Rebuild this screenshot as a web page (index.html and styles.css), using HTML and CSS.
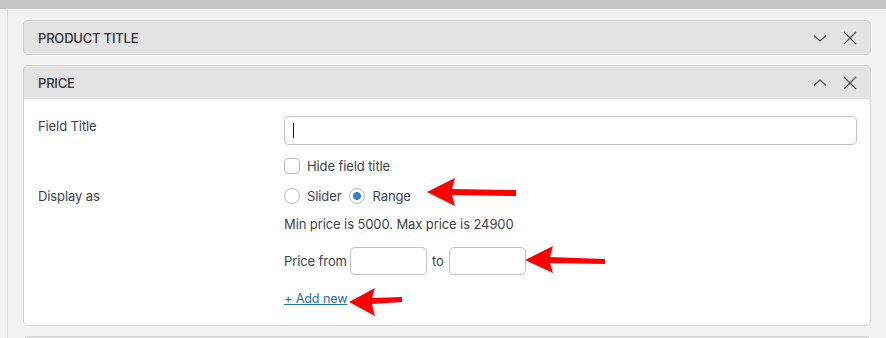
FILE: index.html
```html
<!DOCTYPE html>
<html lang="en">
<head>
    <meta charset="UTF-8">
    <meta name="viewport" content="width=device-width, initial-scale=1.0">
    <title>Filter Fields</title>
    <link rel="stylesheet" href="styles.css">
</head>
<body>
    <div class="topbar"></div>

    <div class="page">
        <div class="panel">
            <div class="panel-head">
                <span class="panel-title">Product title</span>
                <span class="panel-actions">
                    <svg width="14" height="14" viewBox="0 0 14 14"><path d="M1 4.5 L7 10 L13 4.5" /></svg>
                    <svg width="14" height="14" viewBox="0 0 14 14"><path d="M1 1 L13 13 M13 1 L1 13" /></svg>
                </span>
            </div>
        </div>

        <div class="panel">
            <div class="panel-head">
                <span class="panel-title">Price</span>
                <span class="panel-actions">
                    <svg width="14" height="14" viewBox="0 0 14 14"><path d="M1 9.5 L7 4 L13 9.5" /></svg>
                    <svg width="14" height="14" viewBox="0 0 14 14"><path d="M1 1 L13 13 M13 1 L1 13" /></svg>
                </span>
            </div>
            <div class="panel-body">
                <div class="field-row">
                    <label class="field-label" for="fieldTitle">Field Title</label>
                    <div class="field-controls">
                        <input type="text" id="fieldTitle" class="text-input">
                        <label class="option-line">
                            <input type="checkbox" class="check">
                            <span>Hide field title</span>
                        </label>
                    </div>
                </div>

                <div class="field-row">
                    <span class="field-label tall">Display as</span>
                    <div class="field-controls">
                        <div class="option-line">
                            <label class="option"><input type="radio" name="display" class="radio"> <span>Slider</span></label>
                            <label class="option"><input type="radio" name="display" class="radio" checked> <span>Range</span></label>
                        </div>
                        <p class="hint">Min price is 5000. Max price is 24900</p>
                        <div class="price-range">
                            <span>Price from</span>
                            <input type="text" class="small-input">
                            <span>to</span>
                            <input type="text" class="small-input">
                        </div>
                        <a href="#" class="add-new">+ Add new</a>
                    </div>
                </div>
            </div>
        </div>

        <div class="panel">
            <div class="panel-head"></div>
        </div>
    </div>

    <!-- red annotation arrows -->
    <svg class="annotations" width="886" height="338" viewBox="0 0 886 338">
        <polygon points="427,192 455,178 452,189 516,190 516,196 452,195 455,206" />
        <polygon points="525,260 553,246 550,257 605,259 605,264 550,263 553,273" />
        <polygon points="349,302 375,288 372,298 402,297 402,302 372,304 375,316" />
    </svg>
</body>
</html>
```

FILE: styles.css
```css
body {
    margin: 0;
    font-family: Inter, "Noto Sans", sans-serif;
    font-size: 13px;
    letter-spacing: -0.1px;
    color: #3c434a;
    background-color: #f2f2f2;
    overflow: hidden;
}

.topbar {
    height: 9px;
    background-color: #c5c5c5;
}

.page {
    margin-left: 7px;
    border-left: 1px solid #dcdcdc;
    padding: 11px 15px 0 15px;
    min-height: 400px;
}

.panel {
    border: 1px solid #d3d3d3;
    border-radius: 5px;
    background-color: #e3e3e3;
    margin-bottom: 10px;
    overflow: hidden;
}

.panel-head {
    box-sizing: border-box;
    height: 33px;
    display: flex;
    align-items: center;
    justify-content: space-between;
    padding: 1px 13px 0 14px;
}

.panel-title {
    text-transform: uppercase;
    font-weight: 500;
    font-size: 13px;
    color: #333;
    letter-spacing: -0.2px;
}

.panel-actions {
    display: flex;
    gap: 16px;
    align-items: center;
}

.panel-actions svg {
    fill: none;
    stroke: #4a4a4a;
    stroke-width: 1.2;
}

.panel-body {
    background-color: white;
    padding: 17px 13px 17px 14px;
}

.field-row {
    display: flex;
}

.field-row + .field-row {
    margin-top: 10px;
}

.field-label {
    width: 246px;
    flex-shrink: 0;
    line-height: 18px;
    padding-top: 1px;
}

.field-label.tall {
    line-height: 20px;
    padding-top: 0;
}

.field-controls {
    flex: 1;
}

.text-input {
    display: block;
    box-sizing: border-box;
    width: 100%;
    height: 29px;
    margin: 0;
    border: 1px solid #c3c3c3;
    border-radius: 5px;
    background: linear-gradient(#1d1d1d, #1d1d1d) 8px 6px / 1px 15px no-repeat, white;
    outline: none;
}

.option-line {
    display: flex;
    align-items: center;
    gap: 7px;
    height: 20px;
    margin-top: 11px;
}

.field-row + .field-row .option-line {
    margin-top: 0;
    gap: 8px;
}

.option {
    display: flex;
    align-items: center;
    gap: 7px;
}

.check,
.radio {
    appearance: none;
    -webkit-appearance: none;
    width: 16px;
    height: 16px;
    margin: 0;
    border: 1px solid #b9b9b9;
    background-color: white;
    box-sizing: border-box;
}

.check {
    border-radius: 4px;
}

.radio {
    border-radius: 50%;
}

.radio:checked {
    background: radial-gradient(circle, #3582c4 0 3.6px, white 4.2px);
}

.hint {
    margin: 9px 0 0 0;
    line-height: 18px;
}

.price-range {
    display: flex;
    align-items: center;
    gap: 3px;
    margin-top: 14px;
}

.price-range .small-input + span {
    margin: 0 2px;
}

.small-input {
    box-sizing: border-box;
    width: 77px;
    height: 28px;
    margin: 0;
    border: 1px solid #c3c3c3;
    border-radius: 5px;
    background-color: white;
}

.add-new {
    display: inline-block;
    margin-top: 15px;
    line-height: 18px;
    font-size: 12.6px;
    color: #2271b1;
    text-decoration: underline;
}

.annotations {
    position: absolute;
    top: 0;
    left: 0;
    pointer-events: none;
}

.annotations polygon {
    fill: #ff0000;
}
```
